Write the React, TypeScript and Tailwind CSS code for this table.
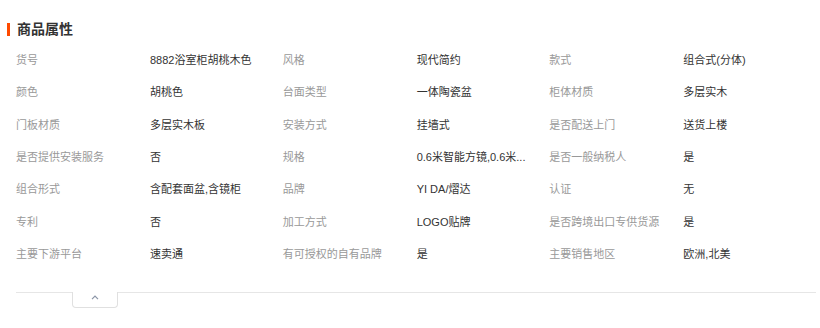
import React from "react";

type Attr = [string, string];

const attrs: Attr[] = [
  ["货号", "8882浴室柜胡桃木色"],
  ["风格", "现代简约"],
  ["款式", "组合式(分体)"],
  ["颜色", "胡桃色"],
  ["台面类型", "一体陶瓷盆"],
  ["柜体材质", "多层实木"],
  ["门板材质", "多层实木板"],
  ["安装方式", "挂墙式"],
  ["是否配送上门", "送货上楼"],
  ["是否提供安装服务", "否"],
  ["规格", "0.6米智能方镜,0.6米..."],
  ["是否一般纳税人", "是"],
  ["组合形式", "含配套面盆,含镜柜"],
  ["品牌", "YI DA/熠达"],
  ["认证", "无"],
  ["专利", "否"],
  ["加工方式", "LOGO贴牌"],
  ["是否跨境出口专供货源", "是"],
  ["主要下游平台", "速卖通"],
  ["有可授权的自有品牌", "是"],
  ["主要销售地区", "欧洲,北美"],
];

export default function App() {
  return (
    <div
      className="w-[820px] h-[328px] bg-white overflow-hidden"
      style={{ fontFamily: '"Liberation Sans", "Noto Sans CJK SC", sans-serif' }}
    >
      <div className="pt-[21px] pl-[7px] flex items-center h-[37px]">
        <span className="block w-[3px] h-[13px] bg-[#ff4a00]" />
        <span className="ml-[7px] text-[14px] leading-[16px] font-bold text-[#333]">商品属性</span>
      </div>
      <div className="ml-[16px] w-[800px] mt-[7px] grid grid-cols-3">
        {attrs.map(([k, v]) => (
          <div key={k} className="flex items-center h-[32.33px] text-[11px] leading-[16px] min-w-0">
            <span className="w-[134px] shrink-0 text-[#999] whitespace-nowrap">{k}</span>
            <span className="text-[#333] whitespace-nowrap">{v}</span>
          </div>
        ))}
      </div>
      <div className="ml-[16px] w-[800px] mt-[22px] border-t border-[#e6e6e6]">
        <div className="ml-[56px] -mt-px w-[46px] h-[16px] bg-white border border-t-0 border-[#e0e0e0] rounded-b-[4px] flex justify-center pt-[3px]">
          <svg width="8" height="5" viewBox="0 0 8 5" fill="none">
            <path d="M1 4.2L4 1.2L7 4.2" stroke="#8a94a6" strokeWidth="1.2" />
          </svg>
        </div>
      </div>
    </div>
  );
}
